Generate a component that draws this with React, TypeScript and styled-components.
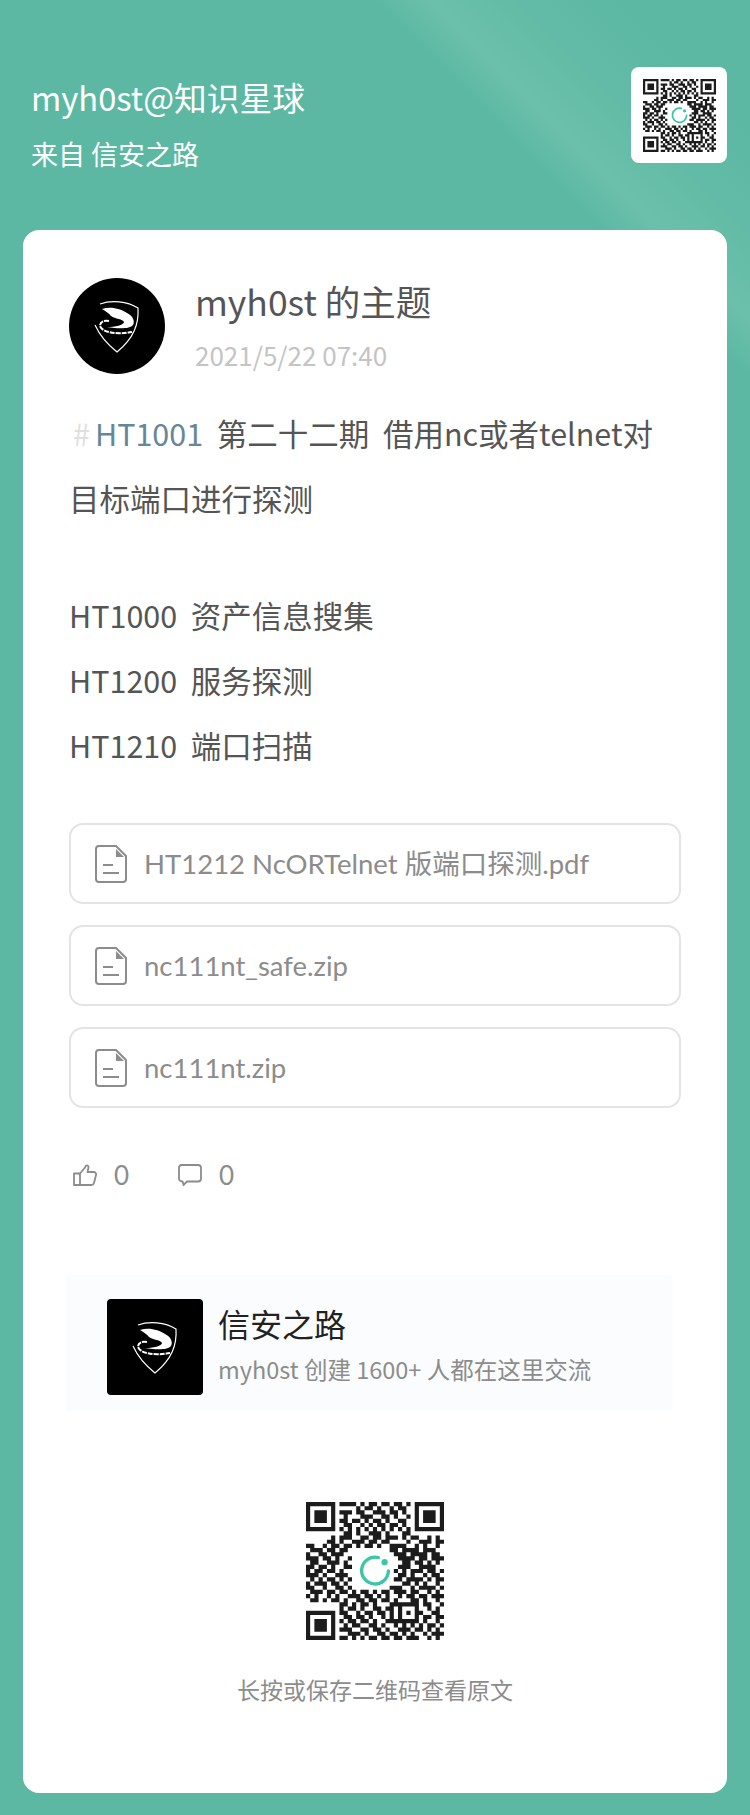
import styled, { createGlobalStyle } from "styled-components";

const GlobalStyle = createGlobalStyle`
  html, body {
    margin: 0;
    padding: 0;
  }
  body {
    font-family: "Noto Sans CJK SC", "Noto Sans", sans-serif;
    background: #5cb8a3;
  }
`;

const QR_ROWS = [
  "111111101111010110110110101111111",
  "100000100000101101001011001000001",
  "101110101110110011101101001011101",
  "101110100100011100110100101011101",
  "101110101101101011010011001011101",
  "100000100110010101101101001000001",
  "111111101010101010101010101111111",
  "000000000110100111010001100000000",
  "000000101110011011011101011001010",
  "000001101001110110110000100111011",
  "110010110110101101001111001010010",
  "011101101100000000001101111011100",
  "100110111000000000000111011110110",
  "111011010010000000000011110110111",
  "011001110100000000000001101101010",
  "110110100110000000000011100111100",
  "101101101000000000000101011101101",
  "111010011100000000000011010010110",
  "010101101010000000000110111101011",
  "101110110100000000000001101010010",
  "110010011010000000001110010111101",
  "011101101101011010110111011001010",
  "101001010011101101010010110110111",
  "011010110100110110110100011010010",
  "000000001101011010001111111011001",
  "000000001011010011011010001001010",
  "111111101100101101101010101100110",
  "100000100110110100101010001011011",
  "101110101011011010011111111010010",
  "101110100101100110100101010101101",
  "101110101110011011010011101101010",
  "100000100011101001101101010010111",
  "111111101101010110110110111001010",
];

const qrPath = QR_ROWS.flatMap((row, y) =>
  row.split("").map((cell, x) => (cell === "1" ? `M${x} ${y}h1v1h-1z` : ""))
).join("");

const QrCode = ({ size }: { size: number }) => (
  <svg width={size} height={size} viewBox="0 0 33 33">
    <path d={qrPath} fill="#1c1c1c" />
    <path d="M17.3 13.3A3.2 3.2 0 1 0 19.7 16.5" fill="none" stroke="#3ec5a6" strokeWidth="0.8" strokeLinecap="round" />
    <circle cx="18.8" cy="14.4" r="0.75" fill="#3ec5a6" />
  </svg>
);

const ShieldLogo = () => (
  <svg width="96" height="96" viewBox="0 0 96 96">
    <path d="M31 26C42 22 58 23 69 30C70 46 65 60 48 74C38 66 31 58 26 47" fill="none" stroke="#fff" strokeWidth="1.2" />
    <path d="M33 31C42 28 52 31 58 35C64 38 66 43 64 47C61 51 50 51 38 49C46 49 55 47 55 44C54 41 46 41 42 38C40 35 36 33 33 31Z" fill="#fff" />
    <path d="M40 43C35 42 31 44 31 48C33 54 46 57 63 54" fill="none" stroke="#fff" strokeWidth="2" strokeDasharray="5 1" />
  </svg>
);

const FileIcon = () => (
  <svg width="32" height="38" viewBox="0 0 32 38" fill="none" stroke="#8c8c8c" strokeWidth="2">
    <path d="M4 1H21L31 11V34A3 3 0 0 1 28 37H4A3 3 0 0 1 1 34V4A3 3 0 0 1 4 1Z" />
    <path d="M21 4L29 12H21Z" fill="#8c8c8c" stroke="none" />
    <path d="M8 20H18M8 28H24" />
  </svg>
);

const ThumbIcon = () => (
  <svg width="24" height="22" viewBox="0 0 24 22" fill="none" stroke="#8c8c8c" strokeWidth="1.8" strokeLinejoin="round">
    <path d="M1 9.5H7V21H1Z" />
    <path d="M7 9.5L12 3.5C12.5 1 15.5 0.5 15.5 3.5L14.5 8H20.5C22.5 8 23.5 9.5 23 11L21 19C20.7 20.3 19.5 21 18.5 21H7" />
  </svg>
);

const CommentIcon = () => (
  <svg width="24" height="22" viewBox="0 0 24 22" fill="none" stroke="#8c8c8c" strokeWidth="1.8" strokeLinejoin="round">
    <path d="M4 1H20A3 3 0 0 1 23 4V14.5A3 3 0 0 1 20 17.5H9L5.5 21L4.6 17.5H4A3 3 0 0 1 1 14.5V4A3 3 0 0 1 4 1Z" />
  </svg>
);

const files = ["HT1212 NcORTelnet 版端口探测.pdf", "nc111nt_safe.zip", "nc111nt.zip"];

const App = () => {
  return (
    <>
      <GlobalStyle />
      <Page>
        <Header>
          <HeaderText>
            <PlanetName>myh0st@知识星球</PlanetName>
            <PlanetFrom>来自 信安之路</PlanetFrom>
          </HeaderText>
          <HeaderQr>
            <QrCode size={73} />
          </HeaderQr>
        </Header>
        <Card>
          <Author>
            <Avatar>
              <ShieldLogo />
            </Avatar>
            <AuthorText>
              <AuthorName>myh0st 的主题</AuthorName>
              <PostDate>2021/5/22 07:40</PostDate>
            </AuthorText>
          </Author>
          <Body>
            <Line>
              <Hash>#</Hash>
              <Tag>HT1001</Tag>
              {"  第二十二期  借用nc或者telnet对"}
            </Line>
            <Line>目标端口进行探测</Line>
            <Spacer />
            <Line>{"HT1000  资产信息搜集"}</Line>
            <Line>{"HT1200  服务探测"}</Line>
            <Line>{"HT1210  端口扫描"}</Line>
          </Body>
          <FileList>
            {files.map((name) => (
              <FileRow key={name}>
                <FileIcon />
                <FileName>{name}</FileName>
              </FileRow>
            ))}
          </FileList>
          <Actions>
            <Action>
              <ThumbIcon />
              <Count>0</Count>
            </Action>
            <Action>
              <CommentIcon />
              <Count>0</Count>
            </Action>
          </Actions>
          <Group>
            <GroupLogo>
              <ShieldLogo />
            </GroupLogo>
            <GroupText>
              <GroupName>信安之路</GroupName>
              <GroupInfo>myh0st 创建 1600+ 人都在这里交流</GroupInfo>
            </GroupText>
          </Group>
          <Footer>
            <QrCode size={138} />
            <Caption>长按或保存二维码查看原文</Caption>
          </Footer>
        </Card>
      </Page>
    </>
  );
};

const Page = styled.div`
  width: 750px;
  height: 1815px;
  box-sizing: border-box;
  padding-top: 67px;
  overflow: hidden;
  background: linear-gradient(45deg, #5cb8a3 85.2%, #6bc0aa 87.5%, #62bba6 91%, #5cb8a3 95%);
`;

const Header = styled.header`
  display: flex;
  justify-content: space-between;
  height: 96px;
  padding: 0 23px 0 31px;
  margin-bottom: 67px;
`;

const HeaderText = styled.div`
  display: flex;
  flex-direction: column;
  color: #fff;
`;

const PlanetName = styled.div`
  font-size: 32.7px;
  line-height: 46px;
  margin-top: 7px;
`;

const PlanetFrom = styled.div`
  font-size: 27px;
  line-height: 36px;
  margin-top: 16px;
  white-space: pre;
`;

const HeaderQr = styled.div`
  width: 96px;
  height: 96px;
  background: #fff;
  border-radius: 8px;
  display: flex;
  align-items: center;
  justify-content: center;
`;

const Card = styled.main`
  margin: 0 23px;
  height: 1563px;
  box-sizing: border-box;
  padding: 48px 46px 0;
  background: #fff;
  border-radius: 16px;
`;

const Author = styled.div`
  display: flex;
  gap: 30px;
`;

const Avatar = styled.div`
  width: 96px;
  height: 96px;
  border-radius: 50%;
  background: #000;
  overflow: hidden;
`;

const AuthorText = styled.div`
  display: flex;
  flex-direction: column;
`;

const AuthorName = styled.div`
  font-size: 35.5px;
  line-height: 50px;
  margin-top: -2px;
  color: #555;
`;

const PostDate = styled.div`
  font-size: 26px;
  line-height: 36px;
  margin-top: 11px;
  color: #c4c4c4;
`;

const Body = styled.div`
  margin-top: 27px;
  font-size: 30.5px;
  line-height: 65px;
  color: #555;
`;

const Line = styled.div`
  white-space: pre;
`;

const Hash = styled.span`
  color: #e0e0e0;
  margin: 0 5px 0 4px;
`;

const Tag = styled.span`
  color: #678699;
`;

const Spacer = styled.div`
  height: 52px;
`;

const FileList = styled.div`
  margin-top: 45px;
  display: flex;
  flex-direction: column;
  gap: 21px;
`;

const FileRow = styled.div`
  height: 81px;
  box-sizing: border-box;
  display: flex;
  align-items: center;
  gap: 17px;
  padding-left: 24px;
  border: 2px solid #e4e4e4;
  border-radius: 14px;
`;

const FileName = styled.span`
  font-family: "Lato", "Noto Sans CJK SC", sans-serif;
  font-size: 27.5px;
  line-height: 36px;
  color: #8c8c8c;
`;

const Actions = styled.div`
  margin-top: 56px;
  height: 22px;
  padding-left: 4px;
  display: flex;
  gap: 49px;
`;

const Action = styled.div`
  display: flex;
  align-items: center;
  gap: 17px;
`;

const Count = styled.span`
  font-family: "Lato", sans-serif;
  font-size: 26px;
  color: #8c8c8c;
`;

const Group = styled.div`
  margin: 89px 0 0 -3px;
  width: 606px;
  height: 135px;
  box-sizing: border-box;
  padding: 24px 0 0 41px;
  display: flex;
  gap: 15px;
  background: #fafcfe;
  box-shadow: 0 0 8px #fafcfe;
`;

const GroupLogo = styled.div`
  width: 96px;
  height: 96px;
  border-radius: 4px;
  background: #000;
  overflow: hidden;
`;

const GroupText = styled.div`
  display: flex;
  flex-direction: column;
`;

const GroupName = styled.div`
  font-size: 32px;
  line-height: 46px;
  margin-top: 1px;
  color: #222;
`;

const GroupInfo = styled.div`
  font-size: 23.5px;
  line-height: 34px;
  margin-top: 6px;
  color: #8c8c8c;
`;

const Footer = styled.div`
  margin-top: 92px;
  display: flex;
  flex-direction: column;
  align-items: center;
  gap: 34px;
`;

const Caption = styled.div`
  font-size: 23px;
  line-height: 30px;
  color: #8c8c8c;
`;

export default App;
